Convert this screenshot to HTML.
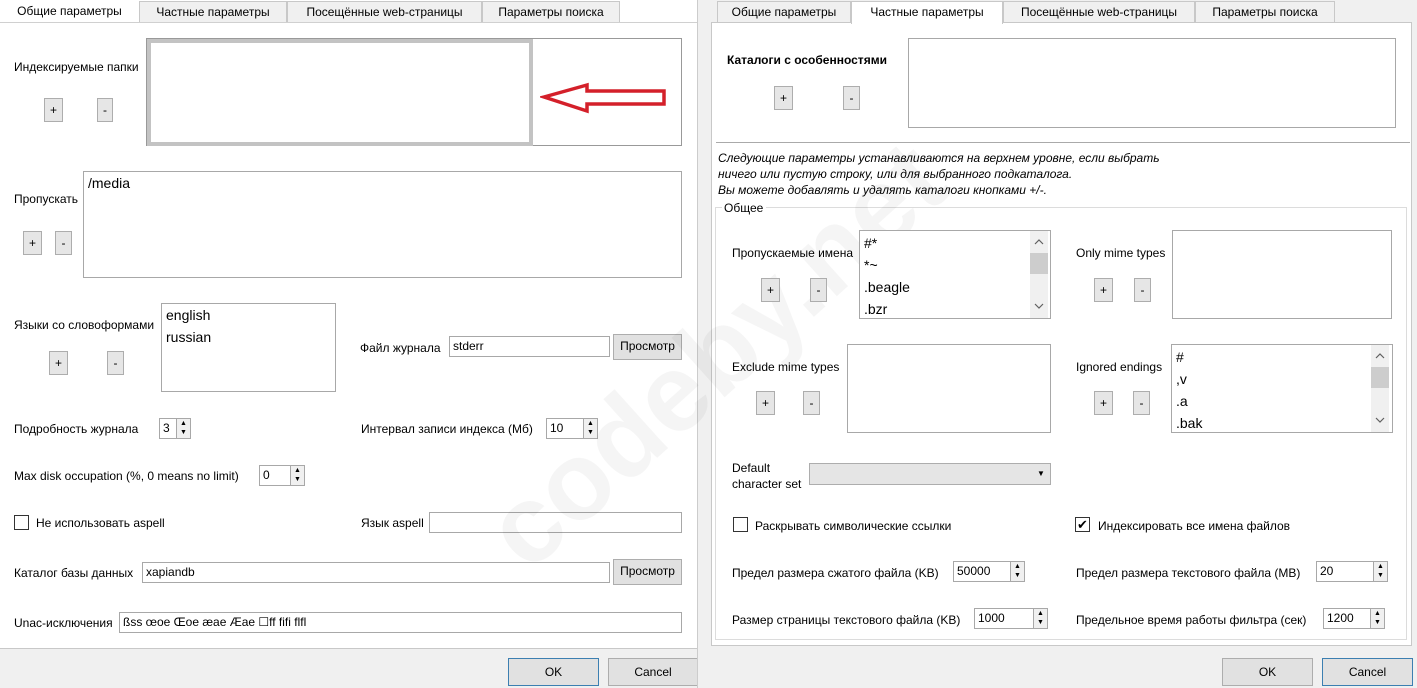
<!DOCTYPE html>
<html><head><meta charset="utf-8"><style>
body{margin:0;width:1417px;height:688px;position:relative;background:#fff;font-family:"Liberation Sans",sans-serif;font-size:12px;color:#000;overflow:hidden}
div,span{position:absolute;box-sizing:border-box}
.t{white-space:nowrap;line-height:14px}
.tab{top:1px;height:21px;border:1px solid #c8c8c8;border-bottom:none;background:#f0f0f0;text-align:center;line-height:20px;white-space:nowrap}
.box{border:1px solid #a8a8a8;background:#fff}
.btn{border:1px solid #adadad;background:#e1e1e1;text-align:center;line-height:22px}
.pm{width:19px;height:24px;border:1px solid #adadad;background:#e6e6e6;text-align:center;line-height:22px}
.in{height:21px;border:1px solid #a8a8a8;background:#fff;padding-left:3px;line-height:19px;white-space:nowrap}
.sp{width:15px;height:21px;border:1px solid #a8a8a8;background:#f0f0f0;font-size:7px;line-height:9px;text-align:center}
.sb{width:18px;background:#f0f0f0}
.lst{font-size:14px;line-height:22px;padding-left:4px}
i{font-style:italic}
</style></head><body>
<!-- LEFT -->
<div style="left:0;top:22px;width:697px;height:627px;border-top:1px solid #d0d0d0"></div>
<div class="tab" style="left:0;width:139px;background:#fff;border:none">Общие параметры</div>
<div class="tab" style="left:139px;width:148px">Частные параметры</div>
<div class="tab" style="left:287px;width:195px">Посещённые web-страницы</div>
<div class="tab" style="left:482px;width:138px">Параметры поиска</div>
<div class="t" style="left:14px;top:60px">Индексируемые папки</div>
<div class="box" style="left:146px;top:38px;width:536px;height:108px;border-color:#999"></div>
<div style="left:147px;top:39px;width:386px;height:107px;border:4px solid #c3c3c3;background:#fff"></div>
<svg style="position:absolute;left:540px;top:80px" width="130" height="40"><path d="M4 17 L47 5 L47 11 L124 11 L124 24 L47 24 L47 31 Z" fill="none" stroke="#d4202a" stroke-width="3.5" stroke-linejoin="miter"/></svg>
<div class="pm" style="left:44px;top:98px">+</div>
<div class="pm" style="left:97px;top:98px;width:16px">-</div>
<div class="t" style="left:14px;top:192px">Пропускать</div>
<div class="box lst" style="left:83px;top:171px;width:599px;height:107px">/media</div>
<div class="pm" style="left:23px;top:231px">+</div>
<div class="pm" style="left:55px;top:231px;width:17px">-</div>
<div class="t" style="left:14px;top:318px">Языки со словоформами</div>
<div class="box lst" style="left:161px;top:303px;width:175px;height:89px">english<br>russian</div>
<div class="pm" style="left:49px;top:351px">+</div>
<div class="pm" style="left:107px;top:351px;width:17px">-</div>
<div class="t" style="left:360px;top:341px">Файл журнала</div>
<div class="in" style="left:449px;top:336px;width:161px">stderr</div>
<div class="btn" style="left:613px;top:334px;width:69px;height:26px">Просмотр</div>
<div class="t" style="left:14px;top:422px">Подробность журнала</div>
<div class="in" style="left:159px;top:418px;width:18px">3</div><div class="sp" style="left:176px;top:418px">▲<br>▼</div>
<div class="t" style="left:361px;top:422px">Интервал записи индекса (Мб)</div>
<div class="in" style="left:546px;top:418px;width:38px">10</div><div class="sp" style="left:583px;top:418px">▲<br>▼</div>
<div class="t" style="left:14px;top:469px">Max disk occupation (%, 0 means no limit)</div>
<div class="in" style="left:259px;top:465px;width:32px">0</div><div class="sp" style="left:290px;top:465px">▲<br>▼</div>
<div style="left:14px;top:515px;width:15px;height:15px;border:1px solid #333;background:#fff"></div>
<div class="t" style="left:36px;top:516px">Не использовать aspell</div>
<div class="t" style="left:361px;top:516px">Язык aspell</div>
<div class="in" style="left:429px;top:512px;width:253px"></div>
<div class="t" style="left:14px;top:566px">Каталог базы данных</div>
<div class="in" style="left:142px;top:562px;width:468px">xapiandb</div>
<div class="btn" style="left:613px;top:559px;width:69px;height:26px">Просмотр</div>
<div class="t" style="left:14px;top:616px">Unac-исключения</div>
<div class="in" style="left:119px;top:612px;width:563px">ßss œoe Œoe æae Æae ☐ff ﬁfi ﬂfl</div>
<div style="left:0;top:648px;width:697px;height:40px;background:#f0f0f0;border-top:1px solid #c8c8c8"></div>
<div class="btn" style="left:508px;top:658px;width:91px;height:28px;border:1px solid #3c7fb1;line-height:26px">OK</div>
<div class="btn" style="left:608px;top:658px;width:90px;height:28px;line-height:26px">Cancel</div>
<!-- divider -->
<div style="left:697px;top:0;width:11px;height:688px;background:#f0f0f0;border-left:1px solid #ccc"></div>
<!-- RIGHT -->
<div style="left:708px;top:0;width:709px;height:688px;background:#f0f0f0"></div>
<div style="left:711px;top:22px;width:701px;height:624px;background:#fff;border:1px solid #c8c8c8"></div>
<div class="tab" style="left:717px;width:134px">Общие параметры</div>
<div class="tab" style="left:851px;width:152px;background:#fff;border-color:#c8c8c8;height:23px">Частные параметры</div>
<div class="tab" style="left:1003px;width:192px">Посещённые web-страницы</div>
<div class="tab" style="left:1195px;width:140px">Параметры поиска</div>
<div class="t" style="left:727px;top:53px;font-weight:bold">Каталоги с особенностями</div>
<div class="box" style="left:908px;top:38px;width:488px;height:90px"></div>
<div class="pm" style="left:774px;top:86px">+</div>
<div class="pm" style="left:843px;top:86px;width:17px">-</div>
<div style="left:716px;top:142px;width:694px;height:1px;background:#aaa"></div>
<div class="t" style="left:718px;top:150px;line-height:16px"><i>Следующие параметры устанавливаются на верхнем уровне, если выбрать<br>ничего или пустую строку, или для выбранного подкаталога.<br>Вы можете добавлять и удалять каталоги кнопками +/-.</i></div>
<div style="left:715px;top:207px;width:692px;height:433px;border:1px solid #dcdcdc"></div>
<div class="t" style="left:722px;top:201px;background:#fff;padding:0 3px 0 2px">Общее</div>
<!-- watermark -->
<div class="t" style="left:430px;top:300px;font-size:110px;line-height:110px;font-weight:bold;color:#000;opacity:0.035;transform:rotate(-42deg);transform-origin:center">codeby.net</div>
<div class="t" style="left:732px;top:246px">Пропускаемые имена</div>
<div class="box" style="left:859px;top:230px;width:192px;height:89px"></div>
<div class="lst t" style="left:860px;top:232px;line-height:22px;font-size:14px">#*<br>*~<br>.beagle<br>.bzr</div>
<div class="sb" style="left:1030px;top:231px;height:87px"></div>
<div style="left:1030px;top:253px;width:18px;height:21px;background:#cdcdcd"></div>
<svg style="position:absolute;left:1033px;top:236px" width="12" height="80"><path d="M2 8 L6 4 L10 8 M2 68 L6 72 L10 68" fill="none" stroke="#606060" stroke-width="1.2"/></svg>
<div class="pm" style="left:761px;top:278px">+</div>
<div class="pm" style="left:810px;top:278px;width:17px">-</div>
<div class="t" style="left:1076px;top:246px">Only mime types</div>
<div class="box" style="left:1172px;top:230px;width:220px;height:89px"></div>
<div class="pm" style="left:1094px;top:278px">+</div>
<div class="pm" style="left:1134px;top:278px;width:17px">-</div>
<div class="t" style="left:732px;top:360px">Exclude mime types</div>
<div class="box" style="left:847px;top:344px;width:204px;height:89px"></div>
<div class="pm" style="left:756px;top:391px">+</div>
<div class="pm" style="left:803px;top:391px;width:17px">-</div>
<div class="t" style="left:1076px;top:360px">Ignored endings</div>
<div class="box" style="left:1171px;top:344px;width:222px;height:89px"></div>
<div class="lst t" style="left:1172px;top:346px;line-height:22px;font-size:14px">#<br>,v<br>.a<br>.bak</div>
<div class="sb" style="left:1371px;top:345px;height:87px"></div>
<div style="left:1371px;top:367px;width:18px;height:21px;background:#cdcdcd"></div>
<svg style="position:absolute;left:1374px;top:350px" width="12" height="80"><path d="M2 8 L6 4 L10 8 M2 68 L6 72 L10 68" fill="none" stroke="#606060" stroke-width="1.2"/></svg>
<div class="pm" style="left:1094px;top:391px">+</div>
<div class="pm" style="left:1133px;top:391px;width:17px">-</div>
<div class="t" style="left:732px;top:460px;line-height:16px">Default<br>character set</div>
<div style="left:809px;top:463px;width:242px;height:22px;border:1px solid #adadad;background:#e5e5e5"></div>
<div class="t" style="left:1037px;top:467px;font-size:8px">▼</div>
<div style="left:733px;top:517px;width:15px;height:15px;border:1px solid #333;background:#fff"></div>
<div class="t" style="left:755px;top:519px">Раскрывать символические ссылки</div>
<div style="left:1075px;top:517px;width:15px;height:15px;border:1px solid #333;background:#fff;font-size:13px;line-height:13px;text-align:center">✔</div>
<div class="t" style="left:1098px;top:519px">Индексировать все имена файлов</div>
<div class="t" style="left:732px;top:566px">Предел размера сжатого файла (KB)</div>
<div class="in" style="left:953px;top:561px;width:58px">50000</div><div class="sp" style="left:1010px;top:561px">▲<br>▼</div>
<div class="t" style="left:1076px;top:566px">Предел размера текстового файла (MB)</div>
<div class="in" style="left:1316px;top:561px;width:58px">20</div><div class="sp" style="left:1373px;top:561px">▲<br>▼</div>
<div class="t" style="left:732px;top:613px">Размер страницы текстового файла (KB)</div>
<div class="in" style="left:974px;top:608px;width:60px">1000</div><div class="sp" style="left:1033px;top:608px">▲<br>▼</div>
<div class="t" style="left:1076px;top:613px">Предельное время работы фильтра (сек)</div>
<div class="in" style="left:1323px;top:608px;width:48px">1200</div><div class="sp" style="left:1370px;top:608px">▲<br>▼</div>
<div class="btn" style="left:1222px;top:658px;width:91px;height:28px;line-height:26px">OK</div>
<div class="btn" style="left:1322px;top:658px;width:91px;height:28px;border:1px solid #3c7fb1;line-height:26px">Cancel</div>
</body></html>
